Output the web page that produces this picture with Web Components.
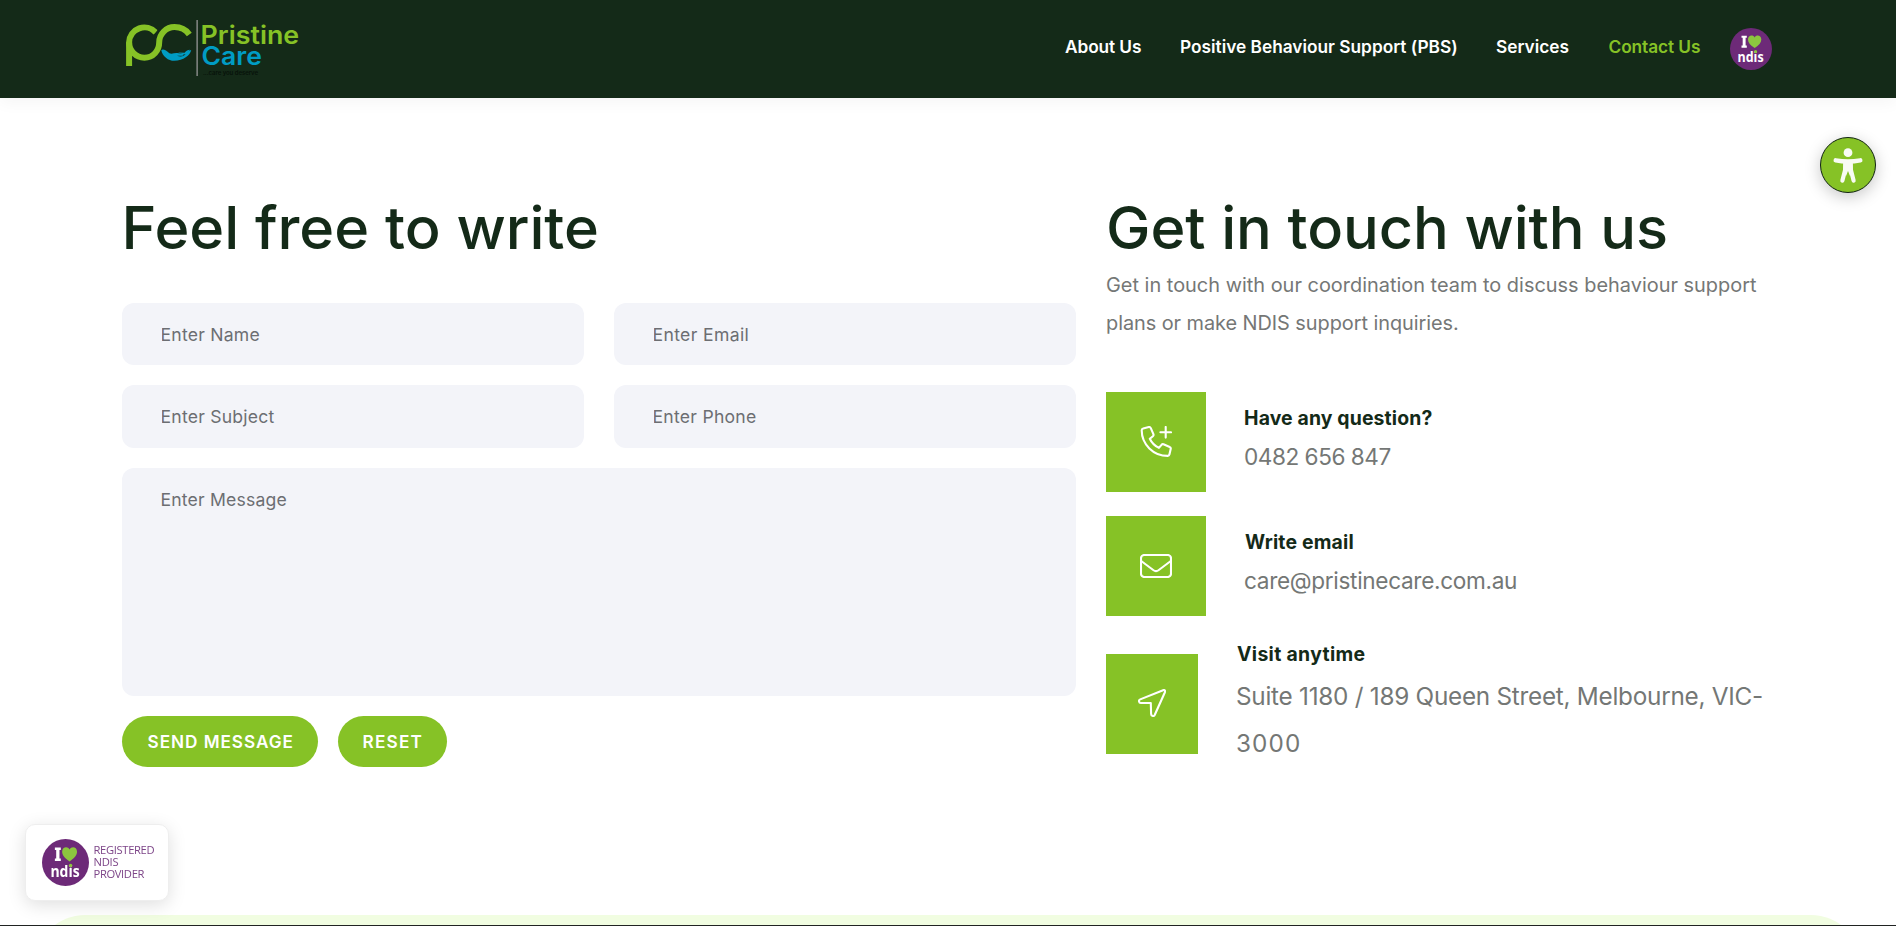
<!DOCTYPE html>
<html lang="en">
<head>
<meta charset="utf-8">
<title>Contact Us - Pristine Care</title>
<style>
html,body{margin:0;height:100%;overflow:hidden}
body{background:#fff;font-family:Inter,"Liberation Sans",sans-serif;color:#142a18}
</style>
</head>
<body>
<pc-page></pc-page>
<script>
const ctx = document.createElement('canvas').getContext('2d');
// Letter spacing and left bearing that set a line of text to a given measure.
function track(text, style, width) {
  ctx.font = `${style.fontWeight} ${style.fontSize} ${style.fontFamily}`;
  const m = ctx.measureText(text);
  const ink = m.actualBoundingBoxRight + m.actualBoundingBoxLeft;
  return { gap: (width - ink) / (text.length - 1), left: m.actualBoundingBoxLeft };
}
function define(name, html, setup) {
  const t = document.createElement('template');
  t.innerHTML = html;
  customElements.define(name, class extends HTMLElement {
    connectedCallback() {
      if (this.shadowRoot) return;
      const r = this.attachShadow({ mode: 'open' });
      r.append(t.content.cloneNode(true));
      if (setup) setup(this, r);
    }
  });
}

define('pc-line', `<style>:host{display:block;white-space:nowrap}span{display:block}</style><span></span>`, (el, r) => {
  const s = r.querySelector('span'), text = el.getAttribute('text'), w = +el.getAttribute('measure');
  s.textContent = text;
  el.style.width = w + 'px';
  const k = track(text, getComputedStyle(el), w);
  s.style.letterSpacing = k.gap + 'px';
  s.style.marginLeft = k.left + 'px';
});

define('pc-logo', `<style>:host{display:block;width:180px;height:64px}svg{display:block}</style>
<svg width="180" height="64" viewBox="122 16 180 64">
<g fill="none" stroke="#86c226" stroke-width="6">
<path d="M129.1 66V42.3A15.3 15.3 0 0 1 155.8 32.6"/>
<path d="M129.1 42.3A15.3 15.3 0 0 0 144.4 57.7C153 57.7 159.2 51 159.2 42.3A15.3 15.3 0 0 1 174.5 27.1C181 27.1 186 29.8 189.3 34.4"/>
</g>
<path d="M154.4 35.2L158.6 29.2" stroke="#142a18" stroke-width="1"/>
<path fill="#009cc4" d="M161.3 50.2C163 48.6 166.2 50.4 169.4 53.3C172 54.5 174.6 52.7 177.2 53.1L182.6 53.8C184.2 54.1 184 55.6 182.4 55.7L177 55.8C181.4 57.2 184.2 56.1 186 53.8C187.4 51.8 189.1 50.2 191.2 50C190.2 55.2 183.4 60.8 174.2 60.8C168.3 60.8 162.4 56.4 161.3 50.2Z"/>
<path fill="#009cc4" d="M178 52.6L184.6 52.8C186 51 188 49.9 190 49.8L186.2 54.4L183.5 54.2Z"/>
<rect x="196.3" y="20" width="1.7" height="56" fill="#777d78"/>
<g font-family="Inter" font-weight="600" font-size="25">
<text x="200.6" y="43.8" fill="#86c226" textLength="98.6" lengthAdjust="spacingAndGlyphs">Pristine</text>
<text x="201.5" y="64.8" fill="#009cc4" textLength="60.5" lengthAdjust="spacingAndGlyphs">Care</text></g>
<text x="203" y="75" font-family="Inter" font-size="6" font-weight="600" fill="#07120a" textLength="55">...care you deserve</text>
</svg>`);

define('ndis-mark', `<style>:host{display:block;width:var(--d);height:var(--d)}svg{display:block;width:100%;height:100%}</style>
<svg viewBox="0 0 46 46"><circle cx="23" cy="23" r="23" fill="#6d2a78"/>
<g fill="#fff">
<path d="M12.6 8.4H18.4V10.7H17.1V19.2H18.4V21.5H12.6V19.2H13.9V10.7H12.6Z"/>
<text x="8.2" y="37.2" font-family="Open Sans" font-weight="700" font-size="16" textLength="28.6" lengthAdjust="spacingAndGlyphs">ndis</text></g>
<path fill="#8cc63f" d="M27 22C22.4 18.8 19.7 16 19.7 12.5C19.7 7.6 25.3 6.8 27 10.3C28.7 6.8 34.3 7.6 34.3 12.5C34.3 16 31.6 18.8 27 22Z"/>
<circle cx="28" cy="25.9" r="1.7" fill="#8cc63f"/></svg>`);

define('pc-header', `<style>
:host{display:flex;align-items:flex-start;height:98px;box-sizing:border-box;padding:16px 124px 0 122px;background:#142a18;box-shadow:0 5px 15px rgba(0,0,0,.04);position:relative;z-index:1}
nav{display:flex;gap:40px;margin-left:auto;margin-top:11px;font-size:17.3px;font-weight:600;line-height:40px;color:#fff}
.on{color:#86c226}
ndis-mark{--d:42px;margin:12px 0 0 30px}
</style>
<pc-logo></pc-logo>
<nav><pc-line text="About Us" measure="76"></pc-line><pc-line text="Positive Behaviour Support (PBS)" measure="275"></pc-line><pc-line text="Services" measure="72.5"></pc-line><pc-line class="on" text="Contact Us" measure="91.5"></pc-line></nav>
<ndis-mark></ndis-mark>`);

define('pc-field', `<style>
:host{display:block}
input,textarea{display:block;width:100%;height:100%;box-sizing:border-box;border:0;border-radius:12px;margin:0;padding:0 39.5px;background:#f3f4f9;font:400 17.6px/30px Inter,"Liberation Sans",sans-serif;resize:none;outline:0}
textarea{padding-top:17px}
::placeholder{color:#6c6e72;opacity:1}
</style>`, (el, r) => {
  const f = document.createElement(el.hasAttribute('multiline') ? 'textarea' : 'input');
  f.placeholder = el.getAttribute('label');
  r.append(f);
  const k = track(f.placeholder, getComputedStyle(f), +el.getAttribute('measure'));
  f.style.letterSpacing = k.gap + 'px';
  f.style.textIndent = k.left + 'px';
});

define('pc-button', `<style>
:host{display:block}
button{display:flex;align-items:center;height:51px;padding:0 25.5px;border:0;border-radius:26px;background:#86c226;color:#fff;font:600 17.2px/50px Inter,"Liberation Sans",sans-serif}
</style><button type="button"><slot></slot></button>`);

define('pc-form', `<style>
:host{display:block}
h1{margin:0 0 41px;font-size:59.5px;font-weight:500;line-height:70px;padding-left:3.5px}
form{display:grid;grid-template-columns:1fr 1fr;grid-template-rows:62px 63px 228px;gap:20px 30px}
.wide{grid-column:1/-1}
.actions{display:flex;gap:20px;margin-top:20px}
</style>
<h1><pc-line text="Feel free to write" measure="471.5"></pc-line></h1>
<form>
<pc-field label="Enter Name" measure="98"></pc-field><pc-field label="Enter Email" measure="94"></pc-field>
<pc-field label="Enter Subject" measure="113"></pc-field><pc-field label="Enter Phone" measure="102.5"></pc-field>
<pc-field class="wide" multiline label="Enter Message" measure="125"></pc-field>
</form>
<div class="actions"><pc-button><pc-line text="SEND MESSAGE" measure="145"></pc-line></pc-button><pc-button><pc-line text="RESET" measure="58"></pc-line></pc-button></div>`);

define('pc-contact', `<style>
:host{display:flex;align-items:flex-start}
.tile{display:flex;align-items:center;justify-content:center;width:var(--tile,100px);height:100px;background:#86c226;margin-right:39px;margin-top:var(--tile-top,0)}
.text{margin-top:var(--text-top,12px);line-height:28px;font-weight:700;font-size:19.4px}
.value{margin-top:5px;font-size:var(--value,22.6px);line-height:var(--lead,40px);font-weight:400;color:#747775}
</style>
<div class="tile"><slot name="icon"></slot></div>
<div class="text"><slot></slot><div class="value"><slot name="value"></slot></div></div>`);

define('pc-info', `<style>
:host{display:block}
h2{margin:0;padding-left:3px;font-size:59.5px;font-weight:500;line-height:70px}
.lead{margin:3.5px 0 50.5px 1px;font-size:19.9px;line-height:38px;color:#757776}
.list{display:grid;gap:24px}
.visit{--tile:92px;--tile-top:14px;--text-top:0;--value:24.3px;--lead:47px}
svg{display:block;fill:none;stroke:#fff;stroke-width:2.1;stroke-linecap:round;stroke-linejoin:round}
</style>
<h2><pc-line text="Get in touch with us" measure="557"></pc-line></h2>
<div class="lead"><pc-line text="Get in touch with our coordination team to discuss behaviour support" measure="650"></pc-line><pc-line text="plans or make NDIS support inquiries." measure="351"></pc-line></div>
<div class="list">
<pc-contact><svg slot="icon" width="32" height="32" viewBox="0 0 32 32"><path d="M3.2 2.4L8.8 1.1C9.7.9 10.4 1.3 10.8 2.1L13.4 8.2C13.7 9 13.5 9.7 12.9 10.2L9.8 12.8C11.7 16.8 14.8 20 18.9 21.9L21.5 18.8C22 18.2 22.8 18 23.5 18.3L29.7 21C30.5 21.3 30.9 22 30.7 22.9L29.4 28.6C29.2 29.4 28.6 29.9 27.8 29.9C13.4 29.9 1.7 18.4 1.7 4.3C1.7 3.4 2.3 2.6 3.2 2.4ZM25.7 1V11.6M20.4 6.3H31"/></svg>
<pc-line text="Have any question?" measure="186.5"></pc-line><pc-line slot="value" text="0482 656 847" measure="145.5"></pc-line></pc-contact>
<pc-contact><svg slot="icon" width="32" height="24" viewBox="0 0 32 24"><rect x="1" y="1" width="30" height="22" rx="3.2"/><path d="M1.2 7L13.2 16C15 17.4 17 17.4 18.8 16L30.8 7"/></svg>
<pc-line text="Write email" measure="108.5"></pc-line><pc-line slot="value" text="care@pristinecare.com.au" measure="271"></pc-line></pc-contact>
<pc-contact class="visit"><svg slot="icon" width="28" height="28" viewBox="0 0 28 28" style="margin-top:-2px"><path d="M25.1 1.2L2.2 10.4C.3 11.2.7 14 2.8 14H12.8L13.1 25C13.1 27.2 16 27.7 16.8 25.8L26.8 3.5C27.5 1.8 26.6.6 25.1 1.2Z"/></svg>
<pc-line text="Visit anytime" measure="127.5"></pc-line><pc-line slot="value" text="Suite 1180 / 189 Queen Street, Melbourne, VIC-" measure="525"></pc-line><pc-line slot="value" text="3000" measure="62"></pc-line></pc-contact>
</div>`);

define('pc-access', `<style>
:host{position:fixed;left:1820px;top:137px;width:56px;height:56px;border-radius:50%;box-sizing:border-box;border:1.4px solid #102311;background:#86c226;box-shadow:0 4px 16px rgba(0,0,0,.22);z-index:2}
svg{display:block}
</style><svg width="54" height="54" viewBox="-27 -27 54 54" fill="#f8fbf4" stroke="#f8fbf4" stroke-linecap="round" stroke-linejoin="round"><circle cx="0" cy="-12.3" r="4.4" stroke="none"/><path d="M-12.3-4.7Q0-2.4 12.3-4.7" fill="none" stroke-width="4.4"/><path d="M-2.6-2L-2.9 5L-5.6 15.6M2.6-2L2.9 5L5.6 15.6" fill="none" stroke-width="4.2"/><path stroke="none" d="M-4.6-4H4.6L4.8 5L2 11L0 6L-2 11L-4.8 5Z"/></svg>`);

define('pc-badge', `<style>
:host{position:fixed;left:25px;top:824px;width:144px;height:77px;box-sizing:border-box;display:flex;gap:5.5px;padding:14px 0 0 16px;border-radius:10px;background:#fff;border:1px solid #eee;box-shadow:0 4px 18px rgba(0,0,0,.13);z-index:2}
ndis-mark{--d:47px}
.t{font:400 11.2px/12px "Open Sans",sans-serif;color:#7d4588;margin-top:4.5px}
</style><ndis-mark></ndis-mark><div class="t"><pc-line text="REGISTERED" measure="60"></pc-line><pc-line text="NDIS" measure="24"></pc-line><pc-line text="PROVIDER" measure="50"></pc-line></div>`);

define('pc-page', `<style>
:host{display:flex;flex-direction:column;height:100vh;box-sizing:border-box;border-bottom:1px solid #202322;overflow:hidden}
pc-header{flex:none}
main{flex:1;display:grid;grid-template-columns:954px 668px;column-gap:30px;padding:94px 122px 0;min-height:0}
footer{flex:none;height:10px;overflow:hidden;padding:0 35px}
footer div{height:100px;border-radius:50px;background:#f1fde1}
</style><pc-header></pc-header><main><pc-form></pc-form><pc-info></pc-info></main><footer><div></div></footer><pc-access></pc-access><pc-badge></pc-badge>`);
</script>
</body>
</html>
